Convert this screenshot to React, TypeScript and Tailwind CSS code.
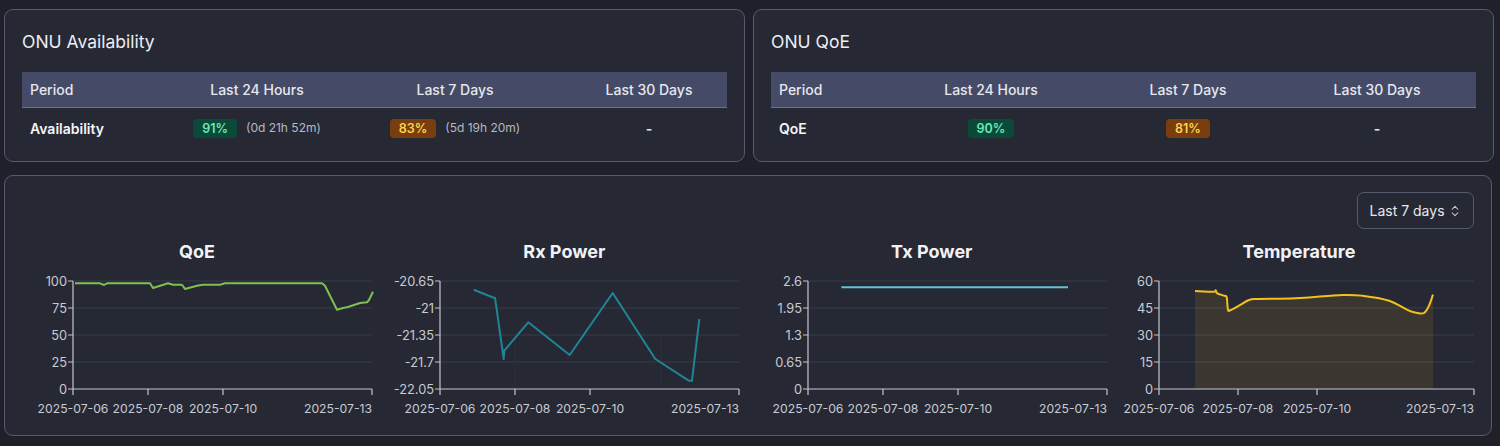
import { ChevronsUpDown } from 'lucide-react';

type Cell = { pct?: string; tone?: 'good' | 'warn'; detail?: string; dash?: boolean };

type StatsCardProps = {
	title: string;
	rowLabel: string;
	cols: string;
	cells: Cell[];
};

const HEADERS = ['Period', 'Last 24 Hours', 'Last 7 Days', 'Last 30 Days'];

function Badge({ pct, tone }: { pct: string; tone: 'good' | 'warn' }) {
	return tone === 'good' ? (
		<span className="px-[9px] h-[19px] leading-[19px] rounded-[4px] text-[12.5px] font-semibold bg-[#0a4a38] text-[#6ee7b7]">
			{pct}
		</span>
	) : (
		<span className="px-[9px] h-[19px] leading-[19px] rounded-[4px] text-[12.5px] font-semibold bg-[#7a3e0e] text-[#fcd34d]">
			{pct}
		</span>
	);
}

function StatsCard({ title, rowLabel, cols, cells }: StatsCardProps) {
	return (
		<div className="flex-1 rounded-[9px] border border-[#555a6e] bg-[#262833] px-[17px] pt-[18px] pb-[13px]">
			<h3 className="text-[17.5px] leading-[28px] text-[#eceef3]">{title}</h3>
			<div className="mt-[16px]">
				<div
					className={`grid ${cols} h-[36px] items-center bg-[#454b66] border-b border-[#6a7191] text-[14px] font-medium text-[#e6e8ef]`}
				>
					{HEADERS.map((h, i) => (
						<div key={h} className={i === 0 ? 'pl-[8px]' : 'text-center'}>
							{h}
						</div>
					))}
				</div>
				<div className={`grid ${cols} h-[40px] items-center text-[14px]`}>
					<div className="pl-[8px] font-semibold text-[#f3f4f7]">{rowLabel}</div>
					{cells.map((c, i) => (
						<div key={i} className="flex items-center justify-center gap-[9px]">
							{c.dash ? (
								<span className="font-semibold text-[#e6e8ef]">-</span>
							) : (
								<>
									<Badge pct={c.pct!} tone={c.tone!} />
									{c.detail && <span className="text-[12px] text-[#b6b9c4]">{c.detail}</span>}
								</>
							)}
						</div>
					))}
				</div>
			</div>
		</div>
	);
}

type Pt = [number, number];

const toLine = (pts: Pt[]) => pts.map((p, i) => `${i ? 'L' : 'M'}${p[0]},${p[1]}`).join(' ');

// catmull-rom -> bezier, for the smoothed temperature curve
const toCurve = (pts: Pt[]) => {
	let d = `M${pts[0][0]},${pts[0][1]}`;
	for (let i = 0; i < pts.length - 1; i++) {
		const p0 = pts[i - 1] || pts[i];
		const p1 = pts[i];
		const p2 = pts[i + 1];
		const p3 = pts[i + 2] || p2;
		const c1: Pt = [p1[0] + (p2[0] - p0[0]) / 6, p1[1] + (p2[1] - p0[1]) / 6];
		const c2: Pt = [p2[0] - (p3[0] - p1[0]) / 6, p2[1] - (p3[1] - p1[1]) / 6];
		d += ` C${c1[0]},${c1[1]} ${c2[0]},${c2[1]} ${p2[0]},${p2[1]}`;
	}
	return d;
};

const GRID_Y = [12, 39, 66, 93, 120];
const X_LABELS = ['2025-07-06', '2025-07-08', '2025-07-10', '2025-07-13'];

type ChartProps = {
	title: string;
	yLabels: string[];
	axisX: number;
	ticks: number[];
	children: React.ReactNode;
};

function Chart({ title, yLabels, axisX, ticks, children }: ChartProps) {
	return (
		<div className="flex flex-col items-center">
			<h4 className="text-[18px] leading-[28px] font-bold text-[#f1f2f6]">{title}</h4>
			<svg width="350" height="150" className="mt-[3px] overflow-visible">
				{GRID_Y.slice(0, 4).map((y) => (
					<line key={y} x1={axisX} x2={350} y1={y} y2={y} stroke="#363a4b" strokeWidth="1" />
				))}
				{GRID_Y.map((y, i) => (
					<g key={`t${y}`}>
						<line x1={axisX - 5} x2={axisX} y1={y} y2={y} stroke="#c3c6d0" strokeWidth="1" />
						<text
							x={axisX - 6}
							y={y + 4.5}
							textAnchor="end"
							className="fill-[#c9cbd4] text-[12.8px]"
						>
							{yLabels[i]}
						</text>
					</g>
				))}
				{children}
				<line x1={axisX} x2={axisX} y1={12} y2={120} stroke="#c3c6d0" strokeWidth="1.2" />
				<line x1={axisX} x2={350} y1={120} y2={120} stroke="#c3c6d0" strokeWidth="1.2" />
				{ticks.map((x, i) => (
					<g key={x}>
						<line x1={x} x2={x} y1={120} y2={126} stroke="#c3c6d0" strokeWidth="1.2" />
						<text
							x={i === 3 ? 350 : x}
							y={143.5}
							textAnchor={i === 3 ? 'end' : 'middle'}
							className="fill-[#c9cbd4] text-[12.2px]"
						>
							{X_LABELS[i]}
						</text>
					</g>
				))}
			</svg>
		</div>
	);
}

const QOE: Pt[] = [
	[53, 14.3], [78, 14.3], [82, 16], [85, 14.3], [128, 14.3], [131, 19], [146, 14.3], [151, 15.7],
	[160, 15.7], [163, 20], [175, 16.7], [181, 15.7], [198, 15.7], [203, 14.3], [300, 14.3],
	[303, 16.7], [315, 40.7], [321, 39], [326, 38], [338, 34], [345, 33.3], [347, 31], [351, 22.7],
];

const RX: Pt[] = [
	[84.7, 20.7], [104.7, 28.7], [106, 28.7], [114.7, 90], [115.3, 81.7], [139.3, 53.3],
	[180.7, 86], [223.7, 24], [266.3, 90], [299.7, 111.7], [303, 111.7], [310.3, 50],
];

const TEMP: Pt[] = [
	[71, 22], [90, 22.7], [91.7, 21.3], [93.3, 24.3], [100, 26.7], [102.7, 28.3], [104, 41],
	[106.7, 41], [115, 36.7], [125, 31], [135, 30], [171.7, 29.3], [218.3, 26], [238.3, 26.7],
	[265, 31.7], [285, 41.7], [293.3, 44], [300, 44], [305, 36.7], [309, 25.7],
];

export default function App() {
	const tempLine = toCurve(TEMP);
	return (
		<div className="min-h-[446px] bg-[#1f2029] pl-[4px] pr-[8px] pt-[9px] font-['Inter',sans-serif]">
			<div className="flex gap-[8px]">
				<StatsCard
					title="ONU Availability"
					rowLabel="Availability"
					cols="grid-cols-[153px_164px_232px_156px]"
					cells={[
						{ pct: '91%', tone: 'good', detail: '(0d 21h 52m)' },
						{ pct: '83%', tone: 'warn', detail: '(5d 19h 20m)' },
						{ dash: true },
					]}
				/>
				<StatsCard
					title="ONU QoE"
					rowLabel="QoE"
					cols="grid-cols-[113px_214px_180px_198px]"
					cells={[{ pct: '90%', tone: 'good' }, { pct: '81%', tone: 'warn' }, { dash: true }]}
				/>
			</div>

			<div className="mt-[13px] rounded-[9px] border border-[#555a6e] bg-[#262833] px-[17px] pt-[16px] pb-[16px]">
				<div className="flex justify-end">
					<button className="flex h-[37px] w-[117px] items-center justify-center gap-[3px] rounded-[7px] border border-[#555a6e] text-[14px] text-[#e6e8ef]">
						Last 7 days
						<ChevronsUpDown size={14} strokeWidth={1.8} className="text-[#c9cbd4]" />
					</button>
				</div>

				<div className="mt-[9px] grid grid-cols-[repeat(4,350px)] justify-between">
					<Chart title="QoE" yLabels={['100', '75', '50', '25', '0']} axisX={51} ticks={[51, 126, 201, 350]}>
						<path d={toLine(QOE)} fill="none" stroke="#7fc04e" strokeWidth="2" strokeLinejoin="round" />
					</Chart>
					<Chart
						title="Rx Power"
						yLabels={['-20.65', '-21', '-21.35', '-21.7', '-22.05']}
						axisX={51}
						ticks={[51, 126, 201, 350]}
					>
						<line x1={126} x2={126} y1={66} y2={120} stroke="#2c2f3b" strokeWidth="1" />
						<line x1={272} x2={272} y1={66} y2={120} stroke="#2c2f3b" strokeWidth="1" />
						<path d={toLine(RX)} fill="none" stroke="#1e8697" strokeWidth="2" strokeLinejoin="round" />
					</Chart>
					<Chart
						title="Tx Power"
						yLabels={['2.6', '1.95', '1.3', '0.65', '0']}
						axisX={51}
						ticks={[51, 126, 201, 350]}
					>
						<line x1={84.4} x2={311} y1={18.3} y2={18.3} stroke="#5fc6d6" strokeWidth="2" />
					</Chart>
					<Chart title="Temperature" yLabels={['60', '45', '30', '15', '0']} axisX={35} ticks={[35, 114, 193, 350]}>
						<path d={`${tempLine} L309,120 L71,120 Z`} fill="#f2c21b" fillOpacity="0.1" />
						<path d={tempLine} fill="none" stroke="#f2c21b" strokeWidth="2" strokeLinejoin="round" />
					</Chart>
				</div>
			</div>
		</div>
	);
}
